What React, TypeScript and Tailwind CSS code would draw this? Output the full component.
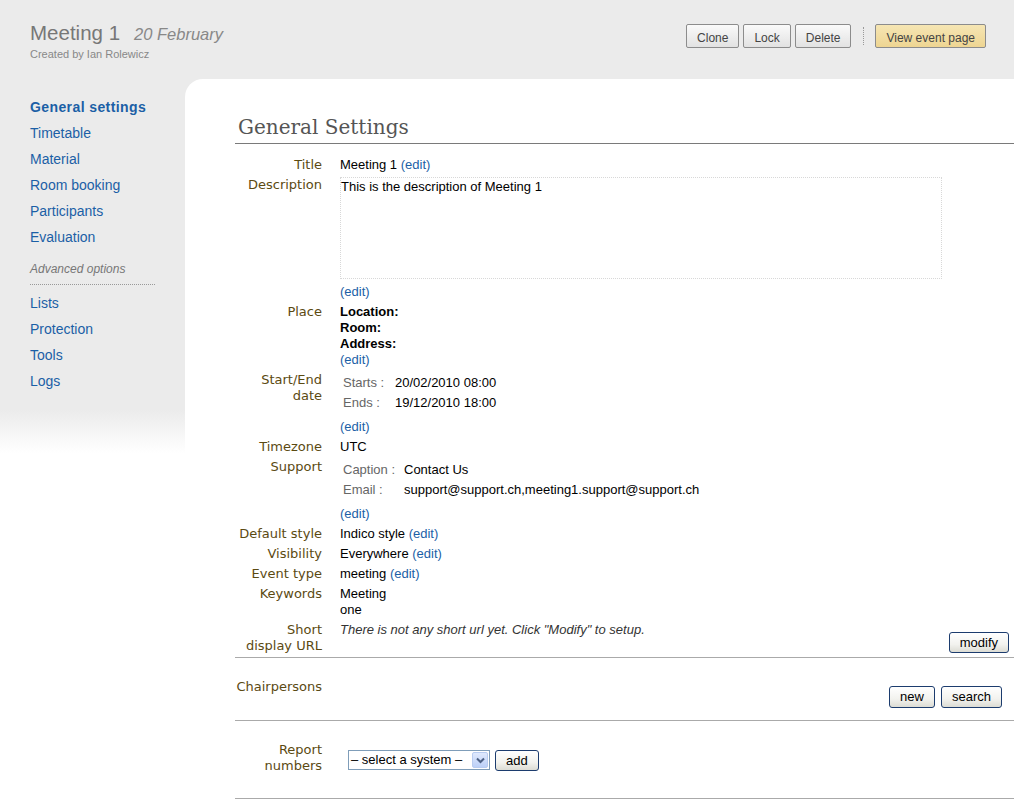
import type { ReactNode } from "react";

const labelCls =
  "w-[87px] shrink-0 text-right text-[13px] leading-[16px] text-[#5b4a12] font-['DejaVu_Sans',Verdana,sans-serif]";

function Edit() {
  return <span className="text-[#1b5fa6] cursor-pointer">(edit)</span>;
}

function Row({ label, children }: { label: ReactNode; children: ReactNode }) {
  return (
    <div className="flex py-[2px]">
      <div className={labelCls}>{label}</div>
      <div className="ml-[18px] flex-1 min-w-0 text-[13px] leading-[16px] text-black">{children}</div>
    </div>
  );
}

function TopButton({ children, yellow }: { children: ReactNode; yellow?: boolean }) {
  return (
    <button
      className={`h-[24px] px-[10px] pt-[4px] text-[12px] leading-[16px] text-[#444] border border-[#8c8c8c] rounded-[2px] ${
        yellow
          ? "bg-[linear-gradient(#f6e6b4,#eed592)]"
          : "bg-[linear-gradient(#fafafa,#e2e2e2)]"
      }`}
    >
      {children}
    </button>
  );
}

function XpButton({ children, className = "" }: { children: ReactNode; className?: string }) {
  return (
    <button
      className={`h-[22px] px-[10px] text-[13px] leading-[16px] text-black border border-[#1c3c6e] rounded-[3px] bg-[linear-gradient(#ffffff,#f2f2ee_60%,#dcdcd4)] ${className}`}
    >
      {children}
    </button>
  );
}

const navMain = ["Timetable", "Material", "Room booking", "Participants", "Evaluation"];
const navAdv = ["Lists", "Protection", "Tools", "Logs"];

export default function App() {
  return (
    <div className="min-h-screen bg-white font-['Liberation_Sans',Arial,sans-serif]">
      <header className="h-[79px] bg-[#ebebeb] flex justify-between">
        <div className="pl-[30px] pt-[21px]">
          <div className="flex items-baseline leading-[24px]">
            <span className="text-[20.5px] text-[#777]">Meeting 1</span>
            <span className="ml-[14px] text-[16.5px] italic text-[#888]">20 February</span>
          </div>
          <div className="mt-[2px] text-[11px] leading-[13px] text-[#888]">Created by Ian Rolewicz</div>
        </div>
        <div className="flex items-start pt-[24px] pr-[28px]">
          <div className="flex gap-[4px]">
            <TopButton>Clone</TopButton>
            <TopButton>Lock</TopButton>
            <TopButton>Delete</TopButton>
          </div>
          <div className="ml-[12px] mr-[11px] mt-[3px] h-[18px] border-l border-dotted border-[#999]" />
          <TopButton yellow>View event page</TopButton>
        </div>
      </header>

      <div className="flex bg-[linear-gradient(#ebebeb_0px,#ebebeb_331px,#ffffff_374px)]">
        <nav className="w-[185px] shrink-0 pl-[30px] pt-[15px] text-[14px] leading-[26px]">
          <div className="font-bold text-[#1b5fa6] tracking-[0.4px]">General settings</div>
          {navMain.map((n) => (
            <div key={n} className="text-[#1b5fa6]">
              {n}
            </div>
          ))}
          <div className="mt-[11px] text-[12px] leading-[16px] italic text-[#777]">Advanced options</div>
          <div className="mt-[7px] w-[125px] border-t border-dotted border-[#999]" />
          <div className="mt-[5px]">
            {navAdv.map((n) => (
              <div key={n} className="text-[#1b5fa6]">
                {n}
              </div>
            ))}
          </div>
        </nav>

        <main className="flex-1 min-w-0 bg-white rounded-tl-[18px] pl-[50px] pt-[36px] pb-[40px]">
          <h1 className="pl-[3px] pb-[4px] border-b border-[#7a7a7a] text-[20px] leading-[24px] text-[#555] font-['DejaVu_Serif',Georgia,serif] font-normal">
            General Settings
          </h1>

          <div className="pt-[11px] border-b border-[#aaa]">
            <Row label="Title">
              Meeting 1 <Edit />
            </Row>
            <Row label="Description">
              <div className="w-[602px] h-[102px] border border-dotted border-[#d8d8d8] pt-[1px]">
                This is the description of Meeting 1
              </div>
              <div className="mt-[5px]">
                <Edit />
              </div>
            </Row>
            <Row label="Place">
              <div className="font-bold">Location:</div>
              <div className="font-bold">Room:</div>
              <div className="font-bold">Address:</div>
              <Edit />
            </Row>
            <Row
              label={
                <>
                  Start/End
                  <br />
                  date
                </>
              }
            >
              <div className="mt-[1px] grid grid-cols-[55px_auto] leading-[20px]">
                <span className="pl-[3px] text-[#666]">Starts :</span>
                <span>20/02/2010 08:00</span>
                <span className="pl-[3px] text-[#666]">Ends :</span>
                <span>19/12/2010 18:00</span>
              </div>
              <div className="mt-[6px]">
                <Edit />
              </div>
            </Row>
            <Row label="Timezone">UTC</Row>
            <Row label="Support">
              <div className="mt-[1px] grid grid-cols-[64px_auto] leading-[20px]">
                <span className="pl-[3px] text-[#666]">Caption :</span>
                <span>Contact Us</span>
                <span className="pl-[3px] text-[#666]">Email :</span>
                <span>support@support.ch,meeting1.support@support.ch</span>
              </div>
              <div className="mt-[6px]">
                <Edit />
              </div>
            </Row>
            <Row label="Default style">
              Indico style <Edit />
            </Row>
            <Row label="Visibility">
              Everywhere <Edit />
            </Row>
            <Row label="Event type">
              meeting <Edit />
            </Row>
            <Row label="Keywords">
              <div>Meeting</div>
              <div>one</div>
            </Row>
            <div className="flex pt-[2px] pb-[3px]">
              <div className={labelCls}>
                Short
                <br />
                display URL
              </div>
              <div className="ml-[18px] flex-1 flex flex-col text-[13px] leading-[16px]">
                <span className="italic text-[#333]">There is not any short url yet. Click "Modify" to setup.</span>
                <XpButton className="self-end mr-[5px] mt-[-6px] !h-[21px]">modify</XpButton>
              </div>
            </div>
          </div>

          <div className="flex pt-[21px] pb-[12px] border-b border-[#aaa]">
            <div className={labelCls}>Chairpersons</div>
            <div className="ml-auto mr-[12px] mt-[7px] flex gap-[6px]">
              <XpButton>new</XpButton>
              <XpButton>search</XpButton>
            </div>
          </div>

          <div className="flex pt-[21px] pb-[24px] border-b border-[#aaa]">
            <div className={labelCls}>
              Report
              <br />
              numbers
            </div>
            <div className="ml-[26px] mt-[8px] flex items-start gap-[5px]">
              <div className="h-[20px] w-[142px] flex items-center border border-[#7f9db9] bg-white pl-[2px] pr-[1px] text-[13px] text-black">
                <span className="flex-1 whitespace-nowrap">– select a system –</span>
                <span className="w-[16px] h-[16px] rounded-[2px] border border-[#b8ccf0] bg-[linear-gradient(#dfe9fd,#bcd0f7)] flex items-center justify-center">
                  <svg width="9" height="7" viewBox="0 0 9 7">
                    <path d="M1 1.5 L4.5 5 L8 1.5" fill="none" stroke="#4d6185" strokeWidth="2" />
                  </svg>
                </span>
              </div>
              <XpButton className="!h-[21px]">add</XpButton>
            </div>
          </div>
        </main>
      </div>
    </div>
  );
}
